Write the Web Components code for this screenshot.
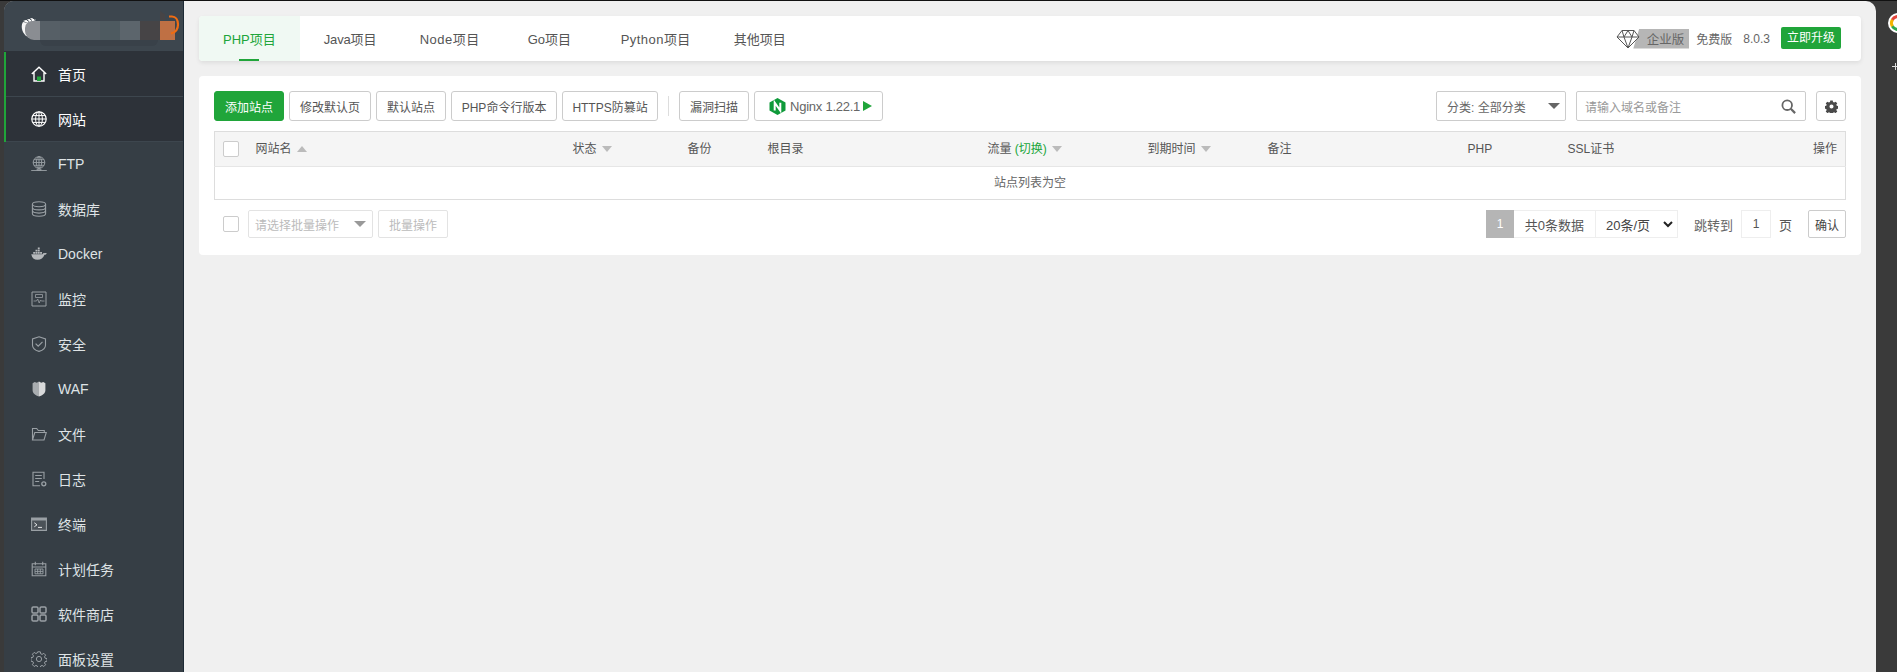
<!DOCTYPE html>
<html lang="zh">
<head>
<meta charset="utf-8">
<title>网站</title>
<style>
html,body{margin:0;padding:0;height:100%;background:#3a3a3a;overflow:hidden}
body{font:12px "Liberation Sans","Noto Sans CJK SC",sans-serif}
</style>
</head>
<body>
<bt-desktop>
  <bt-sidebar slot="side">
    <bt-nav icon="home" active>首页</bt-nav>
    <bt-nav icon="globe" active>网站</bt-nav>
    <bt-nav icon="ftp">FTP</bt-nav>
    <bt-nav icon="db">数据库</bt-nav>
    <bt-nav icon="docker">Docker</bt-nav>
    <bt-nav icon="monitor">监控</bt-nav>
    <bt-nav icon="shield">安全</bt-nav>
    <bt-nav icon="waf">WAF</bt-nav>
    <bt-nav icon="folder">文件</bt-nav>
    <bt-nav icon="log">日志</bt-nav>
    <bt-nav icon="term">终端</bt-nav>
    <bt-nav icon="cal">计划任务</bt-nav>
    <bt-nav icon="apps">软件商店</bt-nav>
    <bt-nav icon="gear">面板设置</bt-nav>
  </bt-sidebar>
  <bt-tabs>
    <bt-tab active>PHP项目</bt-tab>
    <bt-tab style="width:96px;padding-right:0;letter-spacing:-.15px">Java项目</bt-tab>
    <bt-tab style="width:108px;padding-right:0;letter-spacing:.5px">Node项目</bt-tab>
    <bt-tab style="width:93px;padding-right:0">Go项目</bt-tab>
    <bt-tab style="width:113px;padding-right:0;letter-spacing:.45px">Python项目</bt-tab>
    <bt-tab>其他项目</bt-tab>
    <bt-version slot="right"></bt-version>
  </bt-tabs>
  <bt-card>
    <bt-toolbar>
      <bt-btn primary>添加站点</bt-btn>
      <bt-btn>修改默认页</bt-btn>
      <bt-btn>默认站点</bt-btn>
      <bt-btn style="width:106px">PHP命令行版本</bt-btn>
      <bt-btn style="width:96px">HTTPS防篡站</bt-btn>
      <bt-sep></bt-sep>
      <bt-btn>漏洞扫描</bt-btn>
      <bt-btn nginx>Nginx 1.22.1</bt-btn>
      <bt-filter slot="right"></bt-filter>
    </bt-toolbar>
    <bt-site-table></bt-site-table>
    <bt-footer></bt-footer>
  </bt-card>
</bt-desktop>
<script>
(()=>{

const FONT = '"Liberation Sans","Noto Sans CJK SC",sans-serif';

function svg (body,size) {
  let s = size||16;
  return `<svg xmlns="http://www.w3.org/2000/svg" width="${s}" height="${s}" viewBox="0 0 16 16" fill="none">${body}</svg>`;
}
const G = '#9aa0a5';
const ICONS = {
  home: svg(`<path d="M.8 8 8 1.2 15.2 8M3 6.6V15h10V6.6" stroke="#fff" stroke-width="1.4"/><path d="M6 15v-4.500h4V15z" fill="#20a53a"/>`),
  globe: svg(`<circle cx="8" cy="8" r="7.200" stroke="#fff" stroke-width="1.200"/><ellipse cx="8" cy="8" rx="3.400" ry="7.200" stroke="#fff"/><path d="M8 .8v14.400M.8 8h14.400M1.800 4.600h12.400M1.800 11.400h12.400" stroke="#fff"/>`),
  ftp: svg(`<circle cx="8" cy="6.500" r="5.800" stroke="${G}"/><ellipse cx="8" cy="6.500" rx="2.700" ry="5.800" stroke="${G}"/><path d="M8 .7v11.600M2.200 6.500h11.600M3 3.700h10M3 9.300h10M.2 14.500h15.600M6 13.300h4v1.200H6z" stroke="${G}" stroke-width=".9"/>`),
  db: svg(`<ellipse cx="8" cy="3.200" rx="6.600" ry="2.500" stroke="${G}" stroke-width="1.100"/><path d="M1.400 3.200v9.600c0 1.400 3 2.500 6.600 2.500s6.600-1.100 6.600-2.500V3.200M1.400 6.400c0 1.400 3 2.500 6.600 2.500s6.600-1.100 6.600-2.500M1.400 9.600c0 1.400 3 2.500 6.600 2.500s6.600-1.100 6.600-2.500" stroke="${G}" stroke-width="1.100"/>`),
  docker: svg(`<path d="M.3 8.200h11.200c.4-.9 1.300-1.300 2.300-1 .5-.3 1.200-.4 1.900 0-.3 1-1.200 1.600-2.200 1.600-1 3-3.600 5-7 5-3.400 0-5.600-1.900-6.200-5.600z" fill="#b5b8bb"/><path d="M2.200 5.900h1.900v1.800H2.200zM4.500 5.900h1.900v1.800H4.500zM6.800 5.900h1.900v1.800H6.800zM9.100 5.900h1.900v1.800H9.100zM4.500 3.700h1.900v1.800H4.500zM6.800 3.700h1.900v1.800H6.800zM6.800 1.500h1.900v1.800H6.800z" fill="#b5b8bb"/>`),
  monitor: svg(`<path d="M1 1h14v14H1z" stroke="${G}"/><path d="M4.500 3.500h7v3h-7zM2.500 10h3l1.200-2 1.500 4 1.300-3 .8 1h3.200" stroke="${G}" stroke-width=".8"/>`),
  shield: svg(`<path d="M8 .8 14.500 3v6.200c0 3-2.800 5.100-6.500 6.200-3.700-1.100-6.500-3.200-6.500-6.200V3z" stroke="${G}" stroke-width="1.100"/><path d="m4.600 7.600 2.600 2.600 4.300-4.300" stroke="${G}" stroke-width="1.200"/>`),
  waf: svg(`<path d="M8 .4 5.800 1.800 3.700.9 1.600 2.300v7c0 3 2.600 5 6.400 6.300z" fill="#a9adb0"/><path d="M8 .4l2.200 1.400L12.300.9l2.100 1.400v7c0 3-2.600 5-6.400 6.300z" fill="#d8d9da"/>`),
  folder: svg(`<path d="M1.500 14V2.500h4.200l1.600 2h6v2M1.500 14 3.800 6.500h11.500L13 14z" stroke="${G}" stroke-width="1.100"/>`),
  log: svg(`<path d="M13 8V1.200H2V14.800h7" stroke="${G}" stroke-width="1.100"/><path d="M4.200 4.500h6.600M4.200 7.500h6.600M4.200 10.500h4" stroke="${G}"/><circle cx="12.800" cy="12.800" r="2" stroke="${G}" stroke-width="1.300"/>`),
  term: svg(`<path d="M.6 2h14.800v12.400H.6z" stroke="${G}" fill="#4b5258" stroke-width="1.100"/><path d="M1 2h14v2.500H1z" fill="${G}"/><path d="m3.300 6.800 2.700 2-2.700 2M7 11.400h4" stroke="#e3e5e6" stroke-width="1"/>`),
  cal: svg(`<path d="M1.200 2.800h13.600v12H1.200z" stroke="${G}" stroke-width="1.100"/><path d="M4.300 .8v3.400M11.700 .8v3.400M1.200 6h13.600" stroke="${G}" stroke-width="1.100"/><path d="M4 8h8v4.800H4zM4 10.400h8M6.700 8v4.800M9.300 8v4.800" stroke="${G}" stroke-width=".9"/>`),
  apps: svg(`<rect x="1" y="1" width="6" height="6" rx="1.300" stroke="${G}" stroke-width="1.500"/><rect x="9" y="1" width="6" height="6" rx="1.300" stroke="${G}" stroke-width="1.500"/><rect x="1" y="9" width="6" height="6" rx="1.300" stroke="${G}" stroke-width="1.500"/><rect x="9" y="9" width="6" height="6" rx="1.300" stroke="${G}" stroke-width="1.500"/>`),
  gear: svg(`<path d="M6.700.8h2.600l.4 2 1.400.6 1.700-1.100 1.800 1.800-1.100 1.700.6 1.400 2 .4v2.600l-2 .4-.6 1.400 1.100 1.700-1.800 1.800-1.700-1.100-1.400.6-.4 2H6.700l-.4-2-1.400-.6-1.700 1.100-1.800-1.800 1.100-1.700-.6-1.400-2-.4V6.700l2-.4.6-1.400-1.100-1.700 1.800-1.800 1.700 1.100 1.400-.6z" stroke="${G}"/><circle cx="8" cy="8" r="2.600" stroke="${G}"/>`)
};

function define (name,html,setup) {
  customElements.define(name,class extends HTMLElement {
    constructor () {
      super();
      this.attachShadow({mode:"open"});
      this.shadowRoot.innerHTML = typeof html==="function" ? html(this) : html;
      if (setup) setup(this);
    }
  });
}

define("bt-desktop",`
<style>
:host{display:block;width:1897px;height:672px;position:relative;overflow:hidden;box-sizing:border-box;padding:1px 21px 0 4px;background:linear-gradient(#111 0 1px,#3a3a3a 1px)}
.win{display:flex;height:671px;border-radius:10px 10px 0 0;overflow:hidden;background:#f0f0f0}
main{flex:1;min-width:0;padding:15px 15px 0;box-sizing:border-box}
svg.app{position:absolute;left:1888px;top:13px}
i{position:absolute;left:1892px;top:66px;width:5px;height:1px;background:#ddd}
i:after{content:"";position:absolute;left:3px;top:-3px;width:1px;height:7px;background:#ddd}
</style>
<div class="win"><slot name="side"></slot><main><slot></slot></main></div>
<svg class="app" width="20" height="20" viewBox="0 0 20 20"><circle cx="10" cy="10" r="10" fill="#fff"/><g fill="none" stroke-width="3"><circle cx="10" cy="10" r="6.500" stroke="#2fa84f" stroke-dasharray="10.200 31" transform="rotate(60 10 10)"/><circle cx="10" cy="10" r="6.500" stroke="#f4b400" stroke-dasharray="6.800 35" transform="rotate(150 10 10)"/><circle cx="10" cy="10" r="6.500" stroke="#e2453c" stroke-dasharray="10.200 31" transform="rotate(210 10 10)"/></g></svg>
<i></i>`);

define("bt-sidebar",`
<style>
:host{display:block;width:180px;flex:none;height:671px;overflow:hidden;background:#363e45;border-right:1px solid #1d2a35;box-sizing:border-box}
.logo{height:51px;background:#3d464e;border-bottom:1px solid #2d3239;box-sizing:border-box;display:flex;align-items:center;padding-left:15px;position:relative}
.mark{width:22px;height:23px;flex:none;margin-right:-1px}
.blur{display:flex;height:19px;margin-top:8px;margin-left:-15px;position:relative}
.blur b{display:block;height:19px}
.under{position:absolute;left:36px;top:39px;width:118px;height:6px;background:#394149;border-radius:0 0 6px 6px}
.arc{position:absolute;left:160px;top:14px}
.wedge{position:absolute;left:156px;top:10px;width:5px;height:9px;background:#464446;clip-path:polygon(0 0,100% 40%,100% 100%,0 100%)}
</style>
<div class="logo">
  <svg class="mark" viewBox="0 0 22 23"><path d="M4 6 13 3l4 2-8 3z" fill="#fff"/><path d="M6 3.500l4 3M9 2.500l4 3M12 1.500l4 3" stroke="#3d464e"/><path d="M4 7C2 10 2 16 7 21l4 1C7 18 6 12 9 8z" fill="#f4f4f4"/></svg>
  <div class="under"></div>
  <div class="wedge"></div>
  <div class="blur"><b style="width:15px;background:#8a8d92;border-radius:7px 0 0 9px"></b><b style="width:20px;background:#565f66"></b><b style="width:40px;background:#535c63"></b><b style="width:20px;background:#4e5a60"></b><b style="width:20px;background:#5c656c"></b><b style="width:20px;background:#464446"></b><b style="width:15px;background:#bf7044"></b></div>
  <svg class="arc" width="16" height="25" viewBox="0 0 16 25"><path d="M5 1.500h3c3.500 0 6 3 6 8s-2.500 8-7 9" fill="none" stroke="#ef6c12" stroke-width="2.200"/></svg>
</div>
<slot></slot>`);

define("bt-nav",(me)=>`
<style>
:host{display:flex;align-items:center;height:45px;box-sizing:border-box;padding:0 0 2px 25px;border-left:2px solid transparent;color:#dfe3e5;font:14px ${FONT};gap:11px}
:host([active]){background:#2d3239;border-left-color:#20a53a;color:#fff;box-shadow:inset 0 -1px #3d464e}
span{display:flex;width:16px;height:16px;flex:none}
</style>
<span>${ICONS[me.getAttribute("icon")]||""}</span><slot></slot>`);

define("bt-tabs",`
<style>
:host{display:flex;height:45px;background:#fff;border-radius:4px;box-shadow:0 2px 4px rgba(0,0,0,.08);overflow:hidden}
.r{margin-left:auto;padding-right:20px;display:flex;align-items:center}
</style>
<slot></slot><div class="r"><slot name="right"></slot></div>`);

define("bt-tab",`
<style>
:host{display:flex;align-items:center;padding:0 24px;height:45px;box-sizing:border-box;font:13px ${FONT};color:#555;position:relative;white-space:nowrap;flex:none}
:host([active]){background:#f0f9f3;color:#20a53a}
:host([active])::after{content:"";position:absolute;left:40px;bottom:0;width:20px;height:2px;background:#20a53a}
</style>
<slot></slot>`);

define("bt-version",`
<style>
:host{display:flex;align-items:center;font:12px ${FONT};color:#666}
svg{flex:none;margin-right:-7px;position:relative;z-index:1}
.ent{width:56px;height:20px;background:#b6b6b6;color:#666;clip-path:polygon(6px 0,100% 0,100% 100%,0 100%);display:flex;align-items:center;justify-content:flex-end;padding-right:5px;box-sizing:border-box;font-size:12.500px;margin-right:7px}
.v{margin:0 11px}
.up{background:#20a53a;color:#fff;height:22px;line-height:22px;padding:0 6px;border-radius:2px;margin-top:-2px;width:48px;white-space:nowrap}
</style>
<svg width="24" height="20" viewBox="0 0 24 20" fill="none" stroke="#555" stroke-width="1"><path d="M6 1.500h12L23 8 12 19 1 8zM1 8h22M8 8l4 11 4-11M6 1.500 8 8l4-6.500L16 8l2-6.500" fill="#fff"/></svg>
<div class="ent"><span>企业版</span></div><span>免费版</span><span class="v">8.0.3</span><span class="up">立即升级</span>`);

define("bt-card",`
<style>
:host{display:block;margin-top:15px;background:#fff;border-radius:4px;padding:15px 15px 16px;box-sizing:border-box;height:179px}
</style>
<slot></slot>`);

define("bt-toolbar",`
<style>
:host{display:flex;height:30px;gap:5px;align-items:center}
.r{margin-left:auto}
</style>
<slot></slot><div class="r"><slot name="right"></slot></div>`);

define("bt-sep",`<style>:host{display:block;width:1px;height:20px;background:#ddd;margin:0 5px}</style>`);

define("bt-btn",(me)=>{
  let nginx = me.hasAttribute("nginx");
  return `
<style>
:host{display:flex;align-items:center;justify-content:center;height:30px;box-sizing:border-box;padding:0 10px;border:1px solid #ccc;border-radius:3px;background:#fff;color:#555;font:12px ${FONT};white-space:nowrap;flex:none}
:host([primary]){background:#20a53a;border-color:#20a53a;color:#fff}
:host([nginx]){padding:0 0 0 14px;width:129px;justify-content:flex-start;font-size:13px;letter-spacing:-.25px;color:#666}
svg{flex:none}
</style>
${nginx?`<svg width="17" height="17" viewBox="0 0 17 17" style="margin-right:4px"><path d="M8.500 0 16.500 4.500v8L8.500 17 .5 12.500v-8z" fill="#0f9a3a"/><path d="M5.700 12.600V4.700l5.600 7.900V4.700" fill="none" stroke="#fff" stroke-width="2"/></svg>`:""}
<slot></slot>
${nginx?`<svg width="9" height="10" viewBox="0 0 9 10" style="margin-left:3px"><path d="M0 0 9 5 0 10z" fill="#20a53a"/></svg>`:""}`;
});

define("bt-filter",`
<style>
:host{display:flex;gap:10px;font:12px ${FONT};color:#666}
.box{height:30px;box-sizing:border-box;border:1px solid #ccc;border-radius:2px;display:flex;align-items:center;background:#fff}
.sel{width:130px;padding:0 5px 0 10px;justify-content:space-between}
.sel i{width:0;height:0;border:6px solid transparent;border-top:6px solid #666;border-bottom:0}
.q{width:230px;padding:0 9px 0 8px;justify-content:space-between;color:#999}
.g{width:30px;justify-content:center;border-radius:3px}
svg{flex:none}
</style>
<div class="box sel"><span>分类: 全部分类</span><i></i></div>
<div class="box q"><span>请输入域名或备注</span><svg width="15" height="15" viewBox="0 0 15 15" fill="none" stroke="#666"><circle cx="6.200" cy="6.200" r="4.800" stroke-width="1.800"/><path d="m9.800 9.800 4.300 4.300" stroke-width="2.200"/></svg></div>
<div class="box g"><svg width="13" height="13" viewBox="0 0 16 16"><path fill="#4a4a4a" fill-rule="evenodd" d="M6.500.5h3l.4 2.100 1.300.6 1.800-1.200 2.100 2.100-1.200 1.800.6 1.300 2 .4v3l-2 .4-.6 1.300 1.200 1.800-2.100 2.100-1.800-1.200-1.300.6-.4 2h-3l-.4-2-1.300-.6-1.800 1.200-2.100-2.100 1.200-1.800-.6-1.300-2-.4v-3l2-.4.6-1.300-1.200-1.800 2.100-2.100 1.800 1.200 1.300-.6zM8 5.500a2.500 2.500 0 1 0 0 5 2.500 2.500 0 0 0 0-5z"/></svg></div>`);

define("bt-site-table",`
<style>
:host{display:block;margin-top:10px;font:12px/20px ${FONT};color:#555}
table{border-collapse:collapse;table-layout:fixed;width:1632px;border:1px solid #ddd}
th{height:35px;background:#f5f5f5;font-weight:normal;text-align:left;padding:0 0 0 8px;border-bottom:1px solid #e6e6e6;white-space:nowrap;box-sizing:border-box}
th:nth-child(2){padding-left:9px}
th:last-child{text-align:right;padding-right:8px}
td{height:33px;padding:0;text-align:center;color:#666;box-sizing:border-box}
.cb{display:block;width:16px;height:16px;box-sizing:border-box;border:1px solid #ccc;border-radius:2px;background:#fff}
.up,.dn{display:inline-block;width:0;height:0;border:5px solid transparent;margin-left:5px;vertical-align:1px}
.up{border-bottom:6px solid #bbb;border-top:0}
.dn{border-top:6px solid #bbb;border-bottom:0}
em{font-style:normal;color:#20a53a}
</style>
<table>
<colgroup><col style="width:32px"><col style="width:318px"><col style="width:115px"><col style="width:80px"><col style="width:220px"><col style="width:160px"><col style="width:120px"><col style="width:200px"><col style="width:100px"><col></colgroup>
<thead><tr>
<th><span class="cb"></span></th>
<th>网站名<i class="up"></i></th>
<th>状态<i class="dn"></i></th>
<th>备份</th>
<th>根目录</th>
<th>流量 <em>(切换)</em><i class="dn"></i></th>
<th>到期时间<i class="dn"></i></th>
<th>备注</th>
<th>PHP</th>
<th>SSL证书</th>
<th>操作</th>
</tr></thead>
<tbody><tr><td colspan="11">站点列表为空</td></tr></tbody>
</table>`);

define("bt-footer",`
<style>
:host{display:flex;align-items:center;height:28px;margin-top:10px;font:12px ${FONT};color:#666}
.cb{width:16px;height:16px;box-sizing:border-box;border:1px solid #ccc;border-radius:2px;margin:0 9px;flex:none}
.box{height:28px;box-sizing:border-box;border:1px solid #e3e3e3;border-radius:2px;display:flex;align-items:center;color:#bbb}
.sel{width:125px;padding:0 6px;justify-content:space-between}
.sel i{width:0;height:0;border:6px solid transparent;border-top:6px solid #999;border-bottom:0}
.btn{margin-left:5px;width:70px;justify-content:center}
.pager{margin-left:auto;display:flex;align-items:center;height:28px;color:#555;font-size:13px}
.cur{width:28px;height:28px;background:#b5b5b5;color:#fff;text-align:center;line-height:28px;font-size:12px}
.cell{height:28px;box-sizing:border-box;border:1px solid #eee;display:flex;align-items:center;justify-content:center}
.total{width:81px;border-right:0;border-left:0}
.size{width:83px;padding:0 4px 0 10px;justify-content:space-between;color:#444}
.jump{margin-left:16px;color:#666}
.num{width:30px;margin:0 8px;font-size:12px}
.ok{margin-left:16px;width:38px;height:28px;box-sizing:border-box;border:1px solid #ccc;border-radius:2px;display:flex;align-items:center;justify-content:center;color:#444;font-size:12px}
</style>
<div class="cb"></div>
<div class="box sel"><span>请选择批量操作</span><i></i></div>
<div class="box btn">批量操作</div>
<div class="pager">
  <span class="cur">1</span>
  <span class="cell total">共0条数据</span>
  <span class="cell size"><span>20条/页</span><svg width="10" height="7" viewBox="0 0 10 7" fill="none" stroke="#222" stroke-width="2"><path d="m1 1 4 4 4-4"/></svg></span>
  <span class="jump">跳转到</span>
  <span class="cell num">1</span>
  <span>页</span>
  <span class="ok">确认</span>
</div>`);

})();
</script>
</body>
</html>
